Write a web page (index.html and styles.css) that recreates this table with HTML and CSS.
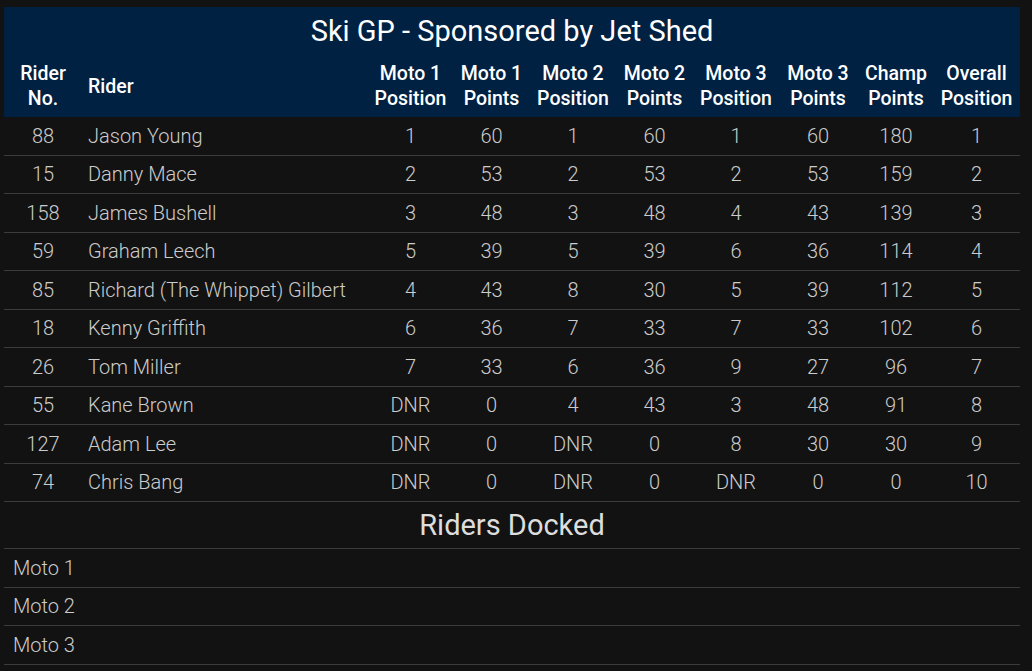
FILE: index.html
```html
<!DOCTYPE html>
<html>
<head>
<meta charset="utf-8">
<link rel="stylesheet" href="styles.css">
</head>
<body>
<div class="wrap">
<table class="results">
<colgroup>
<col class="c-no"><col class="c-name"><col class="c-a"><col class="c-a"><col class="c-b"><col class="c-a"><col class="c-b"><col class="c-b"><col class="c-champ"><col class="c-overall">
</colgroup>
<thead>
<tr class="title-row"><th colspan="10" class="title">Ski GP - Sponsored by Jet Shed</th></tr>
<tr class="head-row">
<th>Rider<br>No.</th><th class="left">Rider</th><th>Moto 1<br>Position</th><th>Moto 1<br>Points</th><th>Moto 2<br>Position</th><th>Moto 2<br>Points</th><th>Moto 3<br>Position</th><th>Moto 3<br>Points</th><th>Champ<br>Points</th><th>Overall<br>Position</th>
</tr>
</thead>
<tbody>
<tr><td>88</td><td class="left">Jason Young</td><td>1</td><td>60</td><td>1</td><td>60</td><td>1</td><td>60</td><td>180</td><td>1</td></tr>
<tr><td>15</td><td class="left">Danny Mace</td><td>2</td><td>53</td><td>2</td><td>53</td><td>2</td><td>53</td><td>159</td><td>2</td></tr>
<tr><td>158</td><td class="left">James Bushell</td><td>3</td><td>48</td><td>3</td><td>48</td><td>4</td><td>43</td><td>139</td><td>3</td></tr>
<tr><td>59</td><td class="left">Graham Leech</td><td>5</td><td>39</td><td>5</td><td>39</td><td>6</td><td>36</td><td>114</td><td>4</td></tr>
<tr><td>85</td><td class="left">Richard (The Whippet) Gilbert</td><td>4</td><td>43</td><td>8</td><td>30</td><td>5</td><td>39</td><td>112</td><td>5</td></tr>
<tr><td>18</td><td class="left">Kenny Griffith</td><td>6</td><td>36</td><td>7</td><td>33</td><td>7</td><td>33</td><td>102</td><td>6</td></tr>
<tr><td>26</td><td class="left">Tom Miller</td><td>7</td><td>33</td><td>6</td><td>36</td><td>9</td><td>27</td><td>96</td><td>7</td></tr>
<tr><td>55</td><td class="left">Kane Brown</td><td>DNR</td><td>0</td><td>4</td><td>43</td><td>3</td><td>48</td><td>91</td><td>8</td></tr>
<tr><td>127</td><td class="left">Adam Lee</td><td>DNR</td><td>0</td><td>DNR</td><td>0</td><td>8</td><td>30</td><td>30</td><td>9</td></tr>
<tr><td>74</td><td class="left">Chris Bang</td><td>DNR</td><td>0</td><td>DNR</td><td>0</td><td>DNR</td><td>0</td><td>0</td><td>10</td></tr>
</tbody>
</table>
<table class="docked">
<thead><tr><th class="docked-title">Riders Docked</th></tr></thead>
<tbody>
<tr><td>Moto 1</td></tr>
<tr><td>Moto 2</td></tr>
<tr><td>Moto 3</td></tr>
</tbody>
</table>
</div>
</body>
</html>
```

FILE: styles.css
```css
html, body {
  margin: 0;
  padding: 0;
  background: #121212;
  font-family: Roboto, "Liberation Sans", sans-serif;
}
.wrap {
  padding: 7px 12px 0 4px;
}
table {
  width: 1016px;
  border-collapse: collapse;
  table-layout: fixed;
}
.c-no { width: 78px; }
.c-name { width: 288px; }
.c-a { width: 81px; }
.c-b { width: 82px; }
.c-champ { width: 74px; }
.c-overall { width: 87px; }
.results thead {
  background: #002142;
  color: #ffffff;
}
.title {
  height: 48px;
  padding: 0;
  font-size: 29px;
  font-weight: 400;
  text-align: center;
  vertical-align: middle;
}
.head-row th {
  height: 62px;
  padding: 0;
  font-size: 19.5px;
  line-height: 25px;
  font-weight: 500;
  text-align: center;
  vertical-align: middle;
}
.head-row th.left { text-align: left; padding-left: 6px; }
.results td {
  height: 37.5px;
  padding: 0;
  font-size: 20px;
  color: #cccccc;
  font-weight: 300;
  text-align: center;
  vertical-align: middle;
  border-bottom: 1px solid #3c3c3c;
}
.results td.left { text-align: left; padding-left: 6px; }
.docked-title {
  height: 46px;
  padding: 0;
  font-size: 29px;
  font-weight: 400;
  color: #dddddd;
  text-align: center;
  vertical-align: middle;
  border-bottom: 1px solid #3c3c3c;
}
.docked td {
  height: 37.5px;
  padding: 0 0 0 9px;
  font-size: 20px;
  font-weight: 300;
  color: #cccccc;
  vertical-align: middle;
  border-bottom: 1px solid #3c3c3c;
}
```
